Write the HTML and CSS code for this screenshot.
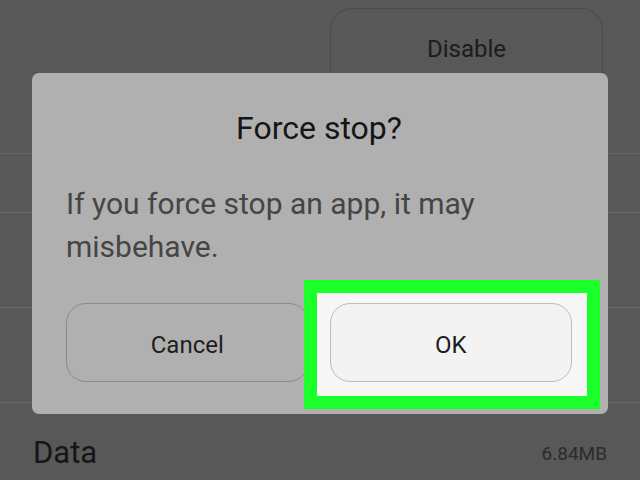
FILE: index.html
```html
<html><head>
<meta name="viewport" content="width=device-width, initial-scale=1">
<link rel="stylesheet" href="styles.css"></head><body>

<div class="screen">
  <div class="top">
    <button type="button" class="btnDisable">Disable</button>
  </div>
  <div class="row row1"></div>
  <div class="row row2"></div>
  <div class="row row3"></div>
  <div class="row rowData">
    <span class="dataLabel">Data</span>
    <span class="dataSize">6.84MB</span>
  </div>

  <div class="dialog">
    <h2 class="dlgTitle">Force stop?</h2>
    <p class="dlgText">If you force stop an app, it may misbehave.</p>
    <div class="actions">
      <button type="button" class="btnCancel">Cancel</button>
      <div class="okWrap">
        <button type="button" class="btnOk">OK</button>
      </div>
    </div>
  </div>
</div>

</body></html>
```

FILE: styles.css
```css
body {margin: 0; font-family: Roboto, "Liberation Sans", Arial, sans-serif;}

.screen {
  position: relative;
  width: 640px;
  height: 480px;
  overflow: hidden;
  background-color: #585858;
}

button {font-family: inherit; cursor: pointer; box-sizing: border-box; padding: 0;}

.top {
  height: 153px;
  box-sizing: border-box;
  padding: 8px 37px 0 0;
  display: flex;
  justify-content: flex-end;
  align-items: flex-start;
}
.btnDisable {
  width: 273px;
  height: 120px;
  padding-top: 26px;
  display: flex;
  justify-content: center;
  align-items: flex-start;
  font-size: 24px;
  line-height: 28px;
  color: #1c1c1c;
  background: transparent;
  border: 1px solid #4a4a4a;
  border-radius: 22px;
}

.row {
  box-sizing: border-box;
  border-top: 1px solid #676767;
}
.row1 {height: 59px;}
.row2 {height: 95px;}
.row3 {height: 95px;}
.rowData {
  height: 78px;
  padding: 32px 33px 0;
  display: flex;
  justify-content: space-between;
  align-items: flex-start;
}
.dataLabel {font-size: 31px; line-height: 36px; color: #151515;}
.dataSize {
  font-size: 19px;
  height: 36px;
  display: flex;
  align-items: center;
  color: #2b2b2b;
}

/* dialog on top of the list */
.dialog {
  position: absolute;
  left: 32px;
  top: 73px;
  width: 576px;
  height: 341px;
  box-sizing: border-box;
  padding: 38px 36px 0 34px;
  background-color: #b0b0b0;
  border-radius: 7px;
}
.dlgTitle {
  margin: 0;
  text-align: center;
  font-size: 32px;
  line-height: 34px;
  font-weight: normal;
  color: #151515;
}
.dlgText {
  margin: 37px 0 0;
  font-size: 30px;
  line-height: 43px;
  color: #454545;
}
.actions {
  margin-top: 35px;
  display: grid;
  grid-template-columns: 1fr 1fr;
  gap: 21px;
}
.btnCancel, .btnOk {
  height: 79px;
  padding-top: 4px;
  font-size: 24px;
  color: #1e1e1e;
  border-radius: 20px;
}
.btnCancel {
  background: transparent;
  border: 1px solid #8a8a8a;
}
.okWrap {position: relative;}
.okWrap:before {
  content: "";
  position: absolute;
  top: -23px;
  left: -26px;
  right: -28px;
  bottom: -27px;
  border: 13px solid #1bff2b;
  background-color: #f7f7f7;
}
.btnOk {
  position: relative;
  width: 100%;
  background-color: #f3f3f3;
  border: 1px solid #bcbcbc;
}
```
